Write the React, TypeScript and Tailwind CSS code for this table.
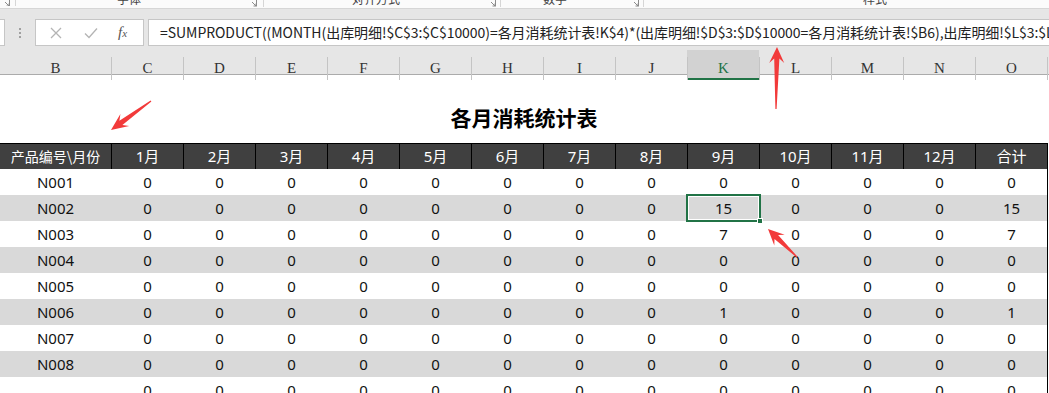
import React from "react";

const months = ["1月", "2月", "3月", "4月", "5月", "6月", "7月", "8月", "9月", "10月", "11月", "12月", "合计"];
const letters = ["B", "C", "D", "E", "F", "G", "H", "I", "J", "K", "L", "M", "N", "O"];

const z = (over: Record<number, number> = {}) => {
  const a = Array(13).fill(0);
  Object.entries(over).forEach(([k, v]) => (a[Number(k)] = v));
  return a;
};

const rows: { id: string; vals: number[] }[] = [
  { id: "N001", vals: z() },
  { id: "N002", vals: z({ 8: 15, 12: 15 }) },
  { id: "N003", vals: z({ 8: 7, 12: 7 }) },
  { id: "N004", vals: z() },
  { id: "N005", vals: z() },
  { id: "N006", vals: z({ 8: 1, 12: 1 }) },
  { id: "N007", vals: z() },
  { id: "N008", vals: z() },
  { id: "", vals: z() },
];

const formula =
  "=SUMPRODUCT((MONTH(出库明细!$C$3:$C$10000)=各月消耗统计表!K$4)*(出库明细!$D$3:$D$10000=各月消耗统计表!$B6),出库明细!$L$3:$L$10000)";

function arrowPoints(tail: [number, number], tip: [number, number], headLen: number, headHalf: number, shaftHalf: number) {
  const dx = tip[0] - tail[0];
  const dy = tip[1] - tail[1];
  const len = Math.hypot(dx, dy);
  const ux = dx / len;
  const uy = dy / len;
  const nx = -uy;
  const ny = ux;
  const bx = tip[0] - headLen * ux;
  const by = tip[1] - headLen * uy;
  const ix = tip[0] - headLen * 0.72 * ux;
  const iy = tip[1] - headLen * 0.72 * uy;
  const pts: [number, number][] = [
    [tail[0] + 0.6 * nx, tail[1] + 0.6 * ny],
    [ix + shaftHalf * nx, iy + shaftHalf * ny],
    [bx + headHalf * nx, by + headHalf * ny],
    tip,
    [bx - headHalf * nx, by - headHalf * ny],
    [ix - shaftHalf * nx, iy - shaftHalf * ny],
    [tail[0] - 0.6 * nx, tail[1] - 0.6 * ny],
  ];
  return pts.map((p) => `${p[0].toFixed(1)},${p[1].toFixed(1)}`).join(" ");
}

function Launcher() {
  return (
    <svg width="8" height="8" viewBox="0 0 8 8" className="block">
      <path d="M0.5 0.5 H7.5 V7.5" fill="none" stroke="#8a8a8a" strokeWidth="1" />
      <path d="M3 3 L7 7 M4.5 7 H7 V4.5" fill="none" stroke="#8a8a8a" strokeWidth="1" />
    </svg>
  );
}

export default function App() {
  return (
    <div
      className="relative w-[1049px] h-[393px] overflow-hidden bg-white"
      style={{ fontFamily: '"Noto Sans CJK SC", "Noto Sans", sans-serif' }}
    >
      {/* ribbon bottom strip */}
      <div className="flex h-[9px] bg-[#fbfbfb] border-b border-[#d6d6d6] overflow-hidden text-[12px] leading-[12px] text-[#444]">
        <div className="w-[16px] flex items-start pl-[2px] border-r border-[#d6d6d6] h-[7px] -mt-[1px] overflow-hidden">
          <Launcher />
        </div>
        <div className="w-[248px] flex items-start border-r border-[#d6d6d6] h-[7px] overflow-hidden">
          <span className="ml-[101px] -mt-[7px]">字体</span>
          <div className="ml-auto mr-[6px] -mt-[1px]"><Launcher /></div>
        </div>
        <div className="w-[237px] flex items-start border-r border-[#d6d6d6] h-[7px] overflow-hidden">
          <span className="ml-[88px] -mt-[7px]">对齐方式</span>
          <div className="ml-auto mr-[4px] -mt-[1px]"><Launcher /></div>
        </div>
        <div className="w-[143px] flex items-start border-r border-[#d6d6d6] h-[7px] overflow-hidden">
          <span className="ml-[42px] -mt-[7px]">数字</span>
          <div className="ml-auto mr-[4px] -mt-[1px]"><Launcher /></div>
        </div>
        <div className="flex-1 flex items-start h-[7px] overflow-hidden">
          <span className="ml-[219px] -mt-[7px]">样式</span>
        </div>
      </div>

      {/* formula bar area */}
      <div className="bg-[#e6e6e6] pt-[10px] pb-[4px]">
        <div className="flex items-stretch h-[27px]">
          <div className="w-[5px] bg-white border-y border-r border-[#c6c6c6]" />
          <div className="w-[30px] flex flex-col items-center justify-center gap-[2px]">
            <span className="w-[2px] h-[2px] bg-[#a0a0a0]" />
            <span className="w-[2px] h-[2px] bg-[#a0a0a0]" />
            <span className="w-[2px] h-[2px] bg-[#a0a0a0]" />
          </div>
          <div className="w-[109px] bg-white border border-[#c6c6c6] flex items-center">
            <svg width="12" height="12" viewBox="0 0 12 12" className="ml-[14px]">
              <path d="M1 1 L11 11 M11 1 L1 11" stroke="#b4b4b4" strokeWidth="1.3" fill="none" />
            </svg>
            <svg width="14" height="12" viewBox="0 0 14 12" className="ml-[22px]">
              <path d="M1 6.5 L5 10.5 L13 1.5" stroke="#b4b4b4" strokeWidth="1.3" fill="none" />
            </svg>
            <span
              className="ml-[20px] italic text-[15px] text-[#555] leading-none"
              style={{ fontFamily: '"Liberation Serif", serif' }}
            >
              f<span className="text-[11px]">x</span>
            </span>
          </div>
          <div className="w-[4px]" />
          <div className="flex-1 bg-white border border-[#c6c6c6] border-r-0 flex items-center overflow-hidden">
            <span className="ml-[11px] whitespace-nowrap text-[14px] text-[#222] tracking-[-0.05px]">{formula}</span>
          </div>
        </div>
      </div>

      {/* column letters */}
      <div
        className="grid grid-cols-[111px_repeat(13,72px)_1fr] h-[25px] bg-[#e6e6e6] border-b border-[#ababab] text-[15px] text-[#333]"
        style={{ fontFamily: '"Liberation Serif", serif' }}
      >
        {letters.map((l, i) => (
          <div
            key={l}
            className={
              "flex flex-col " + (l === "K" ? "bg-[#d2d2d2] text-[#217346] shadow-[inset_0_-2px_0_#217346]" : "")
            }
          >
            <div className="h-[7px]" />
            <div
              className={
                "flex-1 flex items-center justify-center " + (i > 0 ? "border-l border-[#c4c4c4]" : "")
              }
            >
              {l}
            </div>
          </div>
        ))}
        <div className="flex flex-col">
          <div className="h-[7px]" />
          <div className="flex-1 border-l border-[#c4c4c4]" />
        </div>
      </div>

      {/* title */}
      <div className="w-[1048px] h-[68px] flex justify-center pt-[28px]">
        <span className="text-[21px] font-bold leading-[28px] text-black">各月消耗统计表</span>
      </div>

      {/* table */}
      <div
        className="w-[1048px] border-r border-black text-[15px]"
        style={{ fontFamily: '"Noto Sans", "Noto Sans CJK SC", sans-serif' }}
      >
        <div className="grid grid-cols-[111px_repeat(13,72px)] h-[26px] bg-[#404040] text-white border-t border-black">
          <div
            className="flex items-center justify-center text-[14px]"
            style={{ fontFamily: '"Noto Sans CJK SC", sans-serif' }}
          >
            产品编号\月份
          </div>
          {months.map((m) => (
            <div key={m} className="flex items-center justify-center border-l border-black">
              {m}
            </div>
          ))}
        </div>
        {rows.map((r, ri) => (
          <div
            key={ri}
            className={
              "grid grid-cols-[111px_repeat(13,72px)] h-[26px] text-[#111] " +
              (ri % 2 === 1 ? "bg-[#d9d9d9]" : "bg-white")
            }
          >
            <div className="flex items-center justify-center">{r.id}</div>
            {r.vals.map((v, ci) => (
              <div key={ci} className="relative flex items-center justify-center border-l border-transparent">
                {v}
                {ri === 1 && ci === 8 && (
                  <div className="absolute left-[-2px] top-[-1px] w-[75px] h-[28px] border-2 border-[#217346] shadow-[inset_0_0_0_1px_#ffffff]">
                    <div className="absolute right-[-4px] bottom-[-4px] w-[6px] h-[6px] bg-[#217346] border border-white" />
                  </div>
                )}
              </div>
            ))}
          </div>
        ))}
      </div>

      {/* annotation arrows */}
      <svg className="absolute left-0 top-0 pointer-events-none" width="1049" height="393">
        <polygon points={arrowPoints([151, 101], [111, 130], 17, 7.5, 2.6)} fill="#f23a3a" />
        <polygon points={arrowPoints([776, 109], [777, 47], 16, 7.5, 2.6)} fill="#f23a3a" />
        <polygon points={arrowPoints([797, 257], [768, 229], 16, 7.5, 2.6)} fill="#f23a3a" />
      </svg>
    </div>
  );
}
